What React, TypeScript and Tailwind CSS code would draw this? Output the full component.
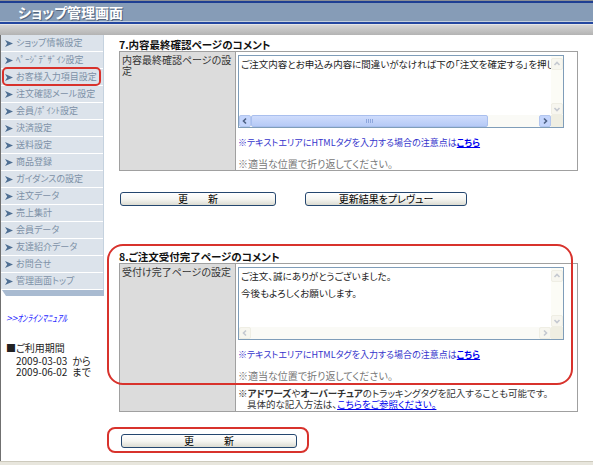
import React from "react";

const menu = [
  "ショップ情報設定",
  "ﾍﾟｰｼﾞﾃﾞｻﾞｲﾝ設定",
  "お客様入力項目設定",
  "注文確認メール設定",
  "会員/ﾎﾟｲﾝﾄ設定",
  "決済設定",
  "送料設定",
  "商品登録",
  "ガイダンスの設定",
  "注文データ",
  "売上集計",
  "会員データ",
  "友達紹介データ",
  "お問合せ",
  "管理画面トップ",
];

type Dir = "up" | "down" | "left" | "right";

function Chevron({ dir, color }: { dir: Dir; color: string }) {
  const d = {
    up: "M1.5 5 L4 2.5 L6.5 5",
    down: "M1.5 3 L4 5.5 L6.5 3",
    left: "M5 1.5 L2.5 4 L5 6.5",
    right: "M3 1.5 L5.5 4 L3 6.5",
  }[dir];
  return (
    <svg width="8" height="8" viewBox="0 0 8 8">
      <path d={d} fill="none" stroke={color} strokeWidth="1.6" />
    </svg>
  );
}

function ScrollBtn({ dir, active }: { dir: Dir; active?: boolean }) {
  return (
    <div
      className={
        active
          ? "w-[12px] h-[12px] shrink-0 flex items-center justify-center rounded-[2px] bg-[#c4d5fc] border border-[#b3c6ef]"
          : "w-[12px] h-[12px] shrink-0 flex items-center justify-center rounded-[2px] bg-[#f7f6ef] border border-[#efeee4]"
      }
    >
      <Chevron dir={dir} color={active ? "#4d6185" : "#c4c8d0"} />
    </div>
  );
}

function FakeTextarea({ children, hActive }: { children: React.ReactNode; hActive?: boolean }) {
  return (
    <div className="w-[326px] h-[73px] border border-[#7f9db9] bg-white flex flex-col">
      <div className="flex flex-1 min-h-0">
        <div className="flex-1 overflow-hidden whitespace-nowrap pl-[2px] pt-[2px] text-[9.5px] leading-[13px] text-[#222]">
          {children}
        </div>
        <div className="w-[12px] flex flex-col justify-between bg-[#fcfcf6] pt-[2px]">
          <ScrollBtn dir="up" />
          <ScrollBtn dir="down" />
        </div>
      </div>
      <div className="h-[12px] flex">
        <div className="flex-1 flex bg-[#fafaf6]">
          <ScrollBtn dir="left" active={hActive} />
          {hActive && (
            <div className="w-[237px] h-[12px] rounded-[2px] border border-[#a9bfee] bg-gradient-to-b from-[#cfdcfc] to-[#b6caf6] flex items-center justify-center gap-[1px]">
              <div className="w-[1px] h-[4px] bg-[#8da6dc]" />
              <div className="w-[1px] h-[4px] bg-[#8da6dc]" />
              <div className="w-[1px] h-[4px] bg-[#8da6dc]" />
              <div className="w-[1px] h-[4px] bg-[#8da6dc]" />
            </div>
          )}
          <div className="flex-1" />
          <ScrollBtn dir="right" active={hActive} />
        </div>
        <div className="w-[12px] bg-[#efeee2]" />
      </div>
    </div>
  );
}

function Btn({ w, children }: { w: string; children: React.ReactNode }) {
  return (
    <div
      className={`${w} h-[14px] rounded-[3px] border border-[#25476f] bg-gradient-to-b from-white via-[#f6f6f2] to-[#dcdcd2] flex items-center justify-center text-[10px] leading-[10px] text-black`}
    >
      {children}
    </div>
  );
}

function Notes() {
  return (
    <>
      <div className="mt-[9px] text-[9px] leading-[12px] text-[#3434cc]">
        ※テキストエリアにHTMLタグを入力する場合の注意点は
        <span className="font-bold underline text-[#0000ee]">こちら</span>
      </div>
      <div className="mt-[9px] text-[10px] leading-[12px] text-[#777]">※適当な位置で折り返してください。</div>
    </>
  );
}

export default function App() {
  return (
    <div className="w-[593px] h-[465px] bg-white overflow-hidden flex flex-col font-['Noto_Sans_CJK_JP',sans-serif] [font-feature-settings:'palt']">
      {/* header */}
      <div className="h-[1px] bg-[#8c8f94]" />
      <div className="h-[2px] bg-[#1f3f92]" />
      <div className="h-[18px] bg-[#869cb7] pl-[18px] pt-[1px]">
        <div className="text-[14px] leading-[16px] font-bold text-white [text-shadow:1px_1px_0_#55667d]">
          ショップ管理画面
        </div>
      </div>
      <div className="h-[1px] bg-[#c6d0dc]" />
      <div className="h-[2px] bg-[#2447a0]" />
      <div className="h-[1px] bg-[#e6e6e6]" />
      <div className="h-[10px] bg-gradient-to-b from-[#d4d4d4] to-[#b3b3b3]" />

      <div className="flex-1 flex border-l border-[#707070]">
        {/* sidebar */}
        <div className="w-[103px] shrink-0 relative">
          <div className="border-r border-[#c5d2df]">
            {menu.map((m) => (
              <div key={m} className="h-[17px] border-b border-white bg-[#dce3eb] flex items-center">
                <svg width="8" height="7" viewBox="0 0 8 7" className="ml-[4px] shrink-0">
                  <path d="M0 0 L8 3.5 L0 7 L2.2 3.5 Z" fill="#4f6f93" />
                </svg>
                <span className="ml-[3px] text-[9px] leading-[10px] whitespace-nowrap text-[#7d91a7]">{m}</span>
              </div>
            ))}
          </div>
          <div className="h-[6px] ml-[1px] bg-[#a9bbd1] [clip-path:polygon(0_0,100%_0,100%_100%,4px_100%)]" />
          <div className="mt-[16px] pl-[5px] text-[10px] leading-[12px] italic text-[#2b2bff]">&gt;&gt;ｵﾝﾗｲﾝﾏﾆｭｱﾙ</div>
          <div className="mt-[18px] pl-[5px] text-[10px] leading-[12px] text-[#222]">■ご利用期間</div>
          <div className="mt-[1px] pl-[15px] text-[10px] leading-[11px] text-[#222]">
            <div>
              2009-03-03<span className="ml-[5px]">から</span>
            </div>
            <div>
              2009-06-02<span className="ml-[5px]">まで</span>
            </div>
          </div>
          <div className="absolute left-[1px] top-[32px] w-[99px] h-[19px] border-2 border-[#d8322c] rounded-[5px]" />
        </div>

        {/* main */}
        <div className="flex-1 pl-[15px] pt-[4px]">
          <div className="text-[10.5px] leading-[12px] font-bold text-[#111]">7.内容最終確認ページのコメント</div>
          <div className="w-[459px] border border-[#a0a0a0] flex">
            <div className="w-[115px] shrink-0 bg-[#dcdcdc] pl-[2px] pt-[2px] text-[10px] leading-[11px] text-[#333]">
              内容最終確認ページの設
              <br />定
            </div>
            <div className="w-[342px] border-l border-[#a0a0a0] pl-[2px] pt-[3px]">
              <FakeTextarea hActive>
                ご注文内容とお申込み内容に間違いがなければ下の「注文を確定する」を押してください。
              </FakeTextarea>
              <Notes />
            </div>
          </div>

          <div className="mt-[21px] ml-[1px] flex gap-[29px]">
            <Btn w="w-[156px]">更　　新</Btn>
            <Btn w="w-[162px]">更新結果をプレヴュー</Btn>
          </div>

          <div className="mt-[45px] relative">
            <div className="text-[10.5px] leading-[12px] font-bold text-[#111]">8.ご注文受付完了ページのコメント</div>
            <div className="w-[459px] border border-[#a0a0a0] flex">
              <div className="w-[115px] shrink-0 bg-[#dcdcdc] pl-[2px] pt-[2px] text-[10px] leading-[11px] text-[#333]">
                受付け完了ページの設定
              </div>
              <div className="w-[342px] border-l border-[#a0a0a0] pl-[2px] pt-[3px] pb-[1px]">
                <FakeTextarea>
                  <div>ご注文、誠にありがとうございました。</div>
                  <div className="mt-[4px]">今後もよろしくお願いします。</div>
                </FakeTextarea>
                <Notes />
                <div className="mt-[6px] text-[9.5px] leading-[11px] text-[#333]">
                  ※<b>アドワーズ</b>や<b>オーバーチュア</b>のトラッキングタグを記入することも可能です。
                  <div className="pl-[9px]">
                    具体的な記入方法は、<span className="underline text-[#0000ee]">こちらをご参照ください。</span>
                  </div>
                </div>
              </div>
            </div>
            <div className="absolute left-[-12px] top-[-7px] w-[466px] h-[141px] border-2 border-[#d8322c] rounded-[16px]" />
          </div>

          <div className="mt-[22px] ml-[2px] relative w-[176px]">
            <Btn w="w-[176px]">更　　　新</Btn>
            <div className="absolute left-[-14px] top-[-7px] w-[202px] h-[26px] border-2 border-[#d8322c] rounded-[8px]" />
          </div>
        </div>
      </div>
      <div className="h-[4px] bg-[#e8e6dd] border-t border-[#cdcabd]" />
    </div>
  );
}
